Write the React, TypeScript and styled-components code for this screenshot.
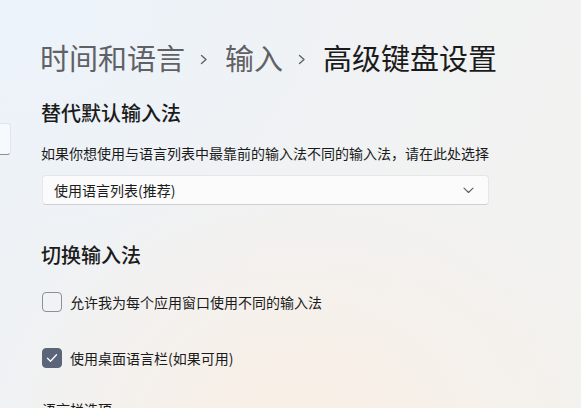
import React from "react";
import styled, { createGlobalStyle } from "styled-components";

const Global = createGlobalStyle`
  html, body { margin: 0; padding: 0; }
  body {
    width: 581px;
    height: 408px;
    overflow: hidden;
    font-family: "Noto Sans CJK SC", "Noto Sans", "Liberation Sans", sans-serif;
  }
`;

const Page = styled.div`
  width: 581px;
  height: 408px;
  overflow: hidden;
  display: flex;
  background:
    radial-gradient(ellipse 320px 260px at 300px 430px, rgba(250, 239, 228, 0.95), rgba(250, 239, 228, 0) 100%),
    radial-gradient(ellipse 360px 260px at 0px 0px, rgba(236, 243, 250, 1), rgba(236, 243, 250, 0) 100%),
    linear-gradient(120deg, #edf2f7 0%, #f1f2f3 55%, #f3f2ef 100%);
`;

const Sidebar = styled.div`
  width: 11px;
  flex: none;
  padding-top: 123px;
`;

const SearchStub = styled.div`
  height: 30px;
  background: #f7fafc;
  border: 1px solid #e1e5e9;
  border-left: none;
  border-bottom-color: #8c8f93;
  border-radius: 0 4px 4px 0;
`;

const Main = styled.div`
  flex: 1;
  padding: 37px 0 0 29px;
  display: flex;
  flex-direction: column;
  & > * { flex-shrink: 0; }
`;

const Breadcrumb = styled.div`
  display: flex;
  align-items: center;
  height: 40px;
  font-size: 29px;
  line-height: 40px;
  letter-spacing: 0;
`;

const Crumb = styled.span<{ $current?: boolean }>`
  color: ${(p) => (p.$current ? "#1b1b1b" : "#5f6165")};
`;

const Sep = styled.span`
  display: flex;
  align-items: center;
  margin: 4px 17px 0 15px;
`;

const SectionTitle = styled.div<{ $top: number }>`
  margin-top: ${(p) => p.$top}px;
  font-size: 20px;
  line-height: 28px;
  font-weight: 500;
  color: #1b1b1b;
  padding-left: 1px;
`;

const Description = styled.div`
  margin-top: 16px;
  font-size: 14px;
  line-height: 20px;
  color: #1b1b1b;
  padding-left: 1px;
`;

const Select = styled.div`
  margin-top: 12px;
  width: 447px;
  height: 30px;
  margin-left: 2px;
  box-sizing: border-box;
  display: flex;
  align-items: center;
  justify-content: space-between;
  padding: 0 14px 0 11px;
  background: #fbfbfb;
  border: 1px solid #e6e6e6;
  border-bottom-color: #cfcfcf;
  border-radius: 4px;
  font-size: 14px;
  color: #1b1b1b;
`;

const CheckRow = styled.label<{ $top: number }>`
  margin-top: ${(p) => p.$top}px;
  display: flex;
  align-items: center;
  gap: 8px;
  margin-left: 2px;
  font-size: 14px;
  line-height: 20px;
  color: #1b1b1b;
`;

const Box = styled.span<{ $checked?: boolean }>`
  width: 20px;
  height: 20px;
  box-sizing: border-box;
  border-radius: 4px;
  display: flex;
  align-items: center;
  justify-content: center;
  background: ${(p) => (p.$checked ? "#5b6579" : "rgba(240, 243, 246, 0.9)")};
  border: 1px solid ${(p) => (p.$checked ? "#5b6579" : "#8d9094")};
`;

const SmallLabel = styled.div`
  margin-top: 31px;
  margin-left: 2px;
  font-size: 14px;
  line-height: 20px;
  color: #1b1b1b;
`;

const Chevron = () => (
  <svg width="8" height="11" viewBox="0 0 8 11" fill="none">
    <path d="M1.5 1.5 L6 5.5 L1.5 9.5" stroke="#5f6165" strokeWidth="1.4" strokeLinecap="round" strokeLinejoin="round" />
  </svg>
);

const Down = () => (
  <svg width="11" height="7" viewBox="0 0 11 7" fill="none">
    <path d="M1 1.2 L5.5 5.5 L10 1.2" stroke="#5c5c5c" strokeWidth="1.1" strokeLinecap="round" strokeLinejoin="round" />
  </svg>
);

const Check = () => (
  <svg width="12" height="10" viewBox="0 0 12 10" fill="none">
    <path d="M1.5 5.2 L4.5 8.2 L10.5 1.8" stroke="#ffffff" strokeWidth="1.3" strokeLinecap="round" strokeLinejoin="round" />
  </svg>
);

export default function App() {
  return (
    <>
      <Global />
      <Page>
        <Sidebar>
          <SearchStub />
        </Sidebar>
        <Main>
          <Breadcrumb>
            <Crumb>时间和语言</Crumb>
            <Sep><Chevron /></Sep>
            <Crumb>输入</Crumb>
            <Sep><Chevron /></Sep>
            <Crumb $current>高级键盘设置</Crumb>
          </Breadcrumb>
          <SectionTitle $top={22}>替代默认输入法</SectionTitle>
          <Description>如果你想使用与语言列表中最靠前的输入法不同的输入法，请在此处选择</Description>
          <Select>
            <span>使用语言列表(推荐)</span>
            <Down />
          </Select>
          <SectionTitle $top={36}>切换输入法</SectionTitle>
          <CheckRow $top={23}>
            <Box />
            <span>允许我为每个应用窗口使用不同的输入法</span>
          </CheckRow>
          <CheckRow $top={36}>
            <Box $checked><Check /></Box>
            <span>使用桌面语言栏(如果可用)</span>
          </CheckRow>
          <SmallLabel>语言栏选项</SmallLabel>
        </Main>
      </Page>
    </>
  );
}
